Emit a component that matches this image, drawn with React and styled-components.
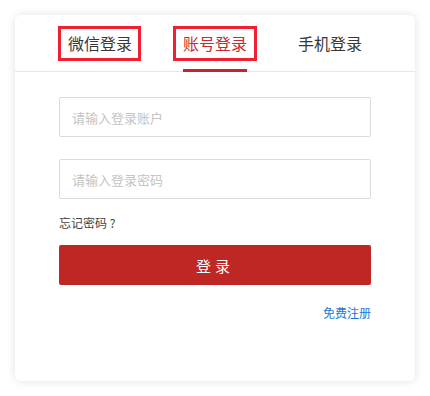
import * as React from "react";
import styled, { createGlobalStyle } from "styled-components";

const GlobalStyle = createGlobalStyle`
  html, body {
    margin: 0;
    padding: 0;
    background: #fff;
  }
  body {
    font-family: "Microsoft YaHei", "Noto Sans CJK SC", "Noto Sans", sans-serif;
    color: #333;
  }
`;

const Page = styled.div`
  padding: 15px;
`;

const Card = styled.section`
  width: 400px;
  height: 366px;
  box-sizing: border-box;
  background: #fff;
  border-radius: 6px;
  box-shadow: 0 0 10px rgba(0, 0, 0, 0.12);
`;

const TabBar = styled.nav`
  display: flex;
  justify-content: center;
  gap: 32px;
  padding: 11px 0 10px;
  border-bottom: 1px solid #e8e8e8;
`;

const Tab = styled.button`
  position: relative;
  height: 35px;
  padding: 0 6.5px;
  border: 3px solid ${({ $boxed }) => ($boxed ? "#f02030" : "transparent")};
  background: none;
  font-family: inherit;
  font-size: 16px;
  line-height: 29px;
  color: ${({ $active }) => ($active ? "#c62a2a" : "#383838")};
  cursor: pointer;

  &::after {
    content: "";
    display: ${({ $active }) => ($active ? "block" : "none")};
    position: absolute;
    left: 7px;
    right: 7px;
    bottom: -14px;
    height: 3px;
    background: #c0272a;
  }
`;

const Form = styled.form`
  display: flex;
  flex-direction: column;
  padding: 25px 44px 0;
`;

const Input = styled.input`
  height: 40px;
  box-sizing: border-box;
  padding: 0 12px;
  border: 1px solid #dcdcdc;
  border-radius: 2px;
  font-family: inherit;
  font-size: 13px;
  color: #333;
  outline: none;
  margin-bottom: ${({ $gap }) => $gap}px;

  &::placeholder {
    color: #c4c4c4;
  }
`;

const Forgot = styled.a`
  font-size: 12px;
  line-height: 20px;
  color: #444;
  text-decoration: none;
  margin-bottom: 12px;
`;

const Submit = styled.button`
  height: 40px;
  border: none;
  border-radius: 2px;
  background: #bf2724;
  color: #fff;
  font-family: inherit;
  font-size: 15px;
  letter-spacing: 4px;
  cursor: pointer;
`;

const Register = styled.a`
  align-self: flex-end;
  margin-top: 18px;
  font-size: 12px;
  line-height: 20px;
  color: #1a78d6;
  text-decoration: none;
`;

const tabs = [
  { label: "微信登录", boxed: true },
  { label: "账号登录", boxed: true, active: true },
  { label: "手机登录" },
];

export default function App() {
  return (
    <Page>
      <GlobalStyle />
      <Card>
        <TabBar>
          {tabs.map((t) => (
            <Tab key={t.label} $boxed={t.boxed} $active={t.active}>
              {t.label}
            </Tab>
          ))}
        </TabBar>
        <Form onSubmit={(e) => e.preventDefault()}>
          <Input placeholder="请输入登录账户" $gap={22} />
          <Input type="password" placeholder="请输入登录密码" $gap={14} />
          <Forgot href="#">忘记密码 ?</Forgot>
          <Submit type="submit">登录</Submit>
          <Register href="#">免费注册</Register>
        </Form>
      </Card>
    </Page>
  );
}
